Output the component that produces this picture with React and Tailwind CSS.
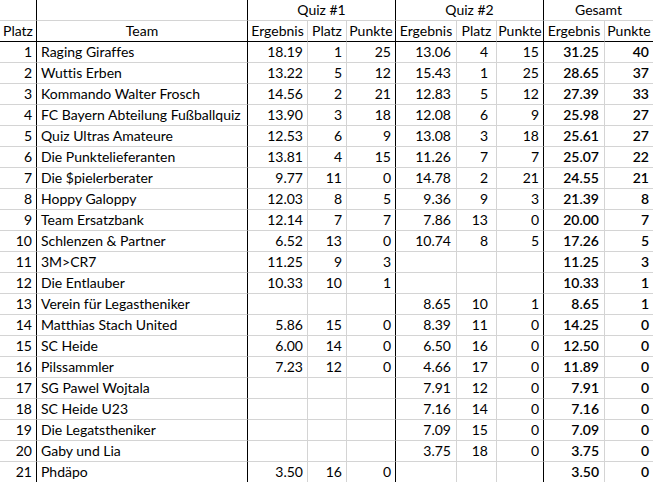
import React from 'react';

const rows = [
  ['1', 'Raging Giraffes', '18.19', '1', '25', '13.06', '4', '15', '31.25', '40'],
  ['2', 'Wuttis Erben', '13.22', '5', '12', '15.43', '1', '25', '28.65', '37'],
  ['3', 'Kommando Walter Frosch', '14.56', '2', '21', '12.83', '5', '12', '27.39', '33'],
  ['4', 'FC Bayern Abteilung Fußballquiz', '13.90', '3', '18', '12.08', '6', '9', '25.98', '27'],
  ['5', 'Quiz Ultras Amateure', '12.53', '6', '9', '13.08', '3', '18', '25.61', '27'],
  ['6', 'Die Punktelieferanten', '13.81', '4', '15', '11.26', '7', '7', '25.07', '22'],
  ['7', 'Die $pielerberater', '9.77', '11', '0', '14.78', '2', '21', '24.55', '21'],
  ['8', 'Hoppy Galoppy', '12.03', '8', '5', '9.36', '9', '3', '21.39', '8'],
  ['9', 'Team Ersatzbank', '12.14', '7', '7', '7.86', '13', '0', '20.00', '7'],
  ['10', 'Schlenzen & Partner', '6.52', '13', '0', '10.74', '8', '5', '17.26', '5'],
  ['11', '3M>CR7', '11.25', '9', '3', '', '', '', '11.25', '3'],
  ['12', 'Die Entlauber', '10.33', '10', '1', '', '', '', '10.33', '1'],
  ['13', 'Verein für Legastheniker', '', '', '', '8.65', '10', '1', '8.65', '1'],
  ['14', 'Matthias Stach United', '5.86', '15', '0', '8.39', '11', '0', '14.25', '0'],
  ['15', 'SC Heide', '6.00', '14', '0', '6.50', '16', '0', '12.50', '0'],
  ['16', 'Pilssammler', '7.23', '12', '0', '4.66', '17', '0', '11.89', '0'],
  ['17', 'SG Pawel Wojtala', '', '', '', '7.91', '12', '0', '7.91', '0'],
  ['18', 'SC Heide U23', '', '', '', '7.16', '14', '0', '7.16', '0'],
  ['19', 'Die Legatstheniker', '', '', '', '7.09', '15', '0', '7.09', '0'],
  ['20', 'Gaby und Lia', '', '', '', '3.75', '18', '0', '3.75', '0'],
  ['21', 'Phdäpo', '3.50', '16', '0', '', '', '', '3.50', '0'],
];

// per column: alignment, padding, weight and right border
const colClass = [
  'text-right pr-1 border-r border-r-black',
  'text-left pl-1 border-r border-r-black',
  'text-right pr-1 border-r border-r-[#d4d4d4]',
  'text-right pr-1 border-r border-r-[#d4d4d4]',
  'text-right pr-1 border-r border-r-black',
  'text-right pr-[5px] border-r border-r-[#d4d4d4]',
  'text-right pr-2 border-r border-r-[#d4d4d4]',
  'text-right pr-1 border-r border-r-black',
  'text-right pr-[5px] font-semibold border-r border-r-[#d4d4d4]',
  'text-right pr-1 font-semibold',
];

const headRight = [
  'border-r border-r-black',
  'border-r border-r-black',
  'border-r border-r-[#d4d4d4]',
  'border-r border-r-[#d4d4d4]',
  'border-r border-r-black',
  'border-r border-r-[#d4d4d4]',
  'border-r border-r-[#d4d4d4]',
  'border-r border-r-black',
  'border-r border-r-[#d4d4d4]',
  '',
];

const subHeads = ['Platz', 'Team', 'Ergebnis', 'Platz', 'Punkte', 'Ergebnis', 'Platz', 'Punkte', 'Ergebnis', 'Punkte'];

const App = () => {
  return (
    <div className="w-[653px] h-[482px] overflow-hidden bg-white text-black text-[14px] font-['Lato',sans-serif] [font-variant-ligatures:none]">
      <div className="grid grid-cols-[37px_211px_60px_39px_49px_61px_40px_47px_61px_48px] auto-rows-[21px] leading-[20px]">
        {/* top header row */}
        <div className="border-r border-r-black border-b border-b-[#d4d4d4]" />
        <div className="border-r border-r-black border-b border-b-[#d4d4d4]" />
        <div className="col-span-3 text-center border-r border-r-black border-b border-b-[#d4d4d4]">Quiz #1</div>
        <div className="col-span-3 text-center border-r border-r-black border-b border-b-[#d4d4d4]">Quiz #2</div>
        <div className="col-span-2 text-center border-b border-b-[#d4d4d4]">Gesamt</div>

        {/* column names */}
        {subHeads.map((h, i) => (
          <div key={i} className={`text-center whitespace-nowrap overflow-hidden border-b border-b-black ${headRight[i]}`}>
            {h}
          </div>
        ))}

        {rows.map((r, ri) =>
          r.map((v, ci) => (
            <div
              key={ri + '-' + ci}
              className={`whitespace-nowrap overflow-hidden border-b border-b-[#d4d4d4] ${colClass[ci]}`}
            >
              {v}
            </div>
          ))
        )}
      </div>
    </div>
  );
};

export default App;
